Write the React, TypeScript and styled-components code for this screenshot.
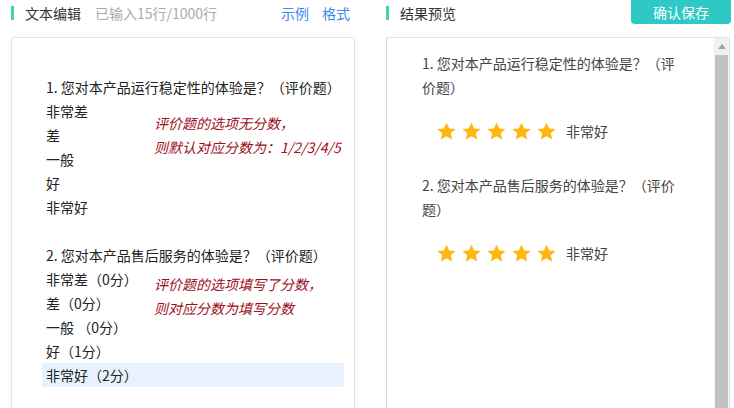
import React from 'react';
import styled, { createGlobalStyle } from 'styled-components';

const GlobalStyle = createGlobalStyle`
  html, body {
    margin: 0;
    padding: 0;
    height: 408px;
    overflow: hidden;
    background: #fff;
  }
  body {
    font-family: "Noto Sans CJK SC", "Noto Sans", "Liberation Sans", sans-serif;
    font-size: 14px;
    color: #333;
  }
`

const Page = styled.div`
  display: flex;
  gap: 31px;
  padding-left: 11px;
  height: 408px;
  overflow: hidden;
`
const Column = styled.div`
  width: 344px;
  display: flex;
  flex-direction: column;
`
const Header = styled.div`
  flex-shrink: 0;
  height: 26px;
  display: flex;
  align-items: center;
  margin-bottom: 11px;
`
const Mark = styled.span`
  width: 3px;
  height: 14px;
  background: #3fd6a4;
  margin-right: 11px;
`
const HeadTitle = styled.span`
  color: #333;
  line-height: 20px;
`
const Counter = styled.span`
  color: #aaa;
  margin-left: 14px;
  line-height: 20px;
`
const Links = styled.div`
  margin-left: auto;
  margin-right: 5px;
  display: flex;
  gap: 13px;
`
const Link = styled.a`
  color: #3d87ee;
  line-height: 20px;
  cursor: pointer;
`
const SaveButton = styled.button`
  margin-left: auto;
  margin-right: -1px;
  align-self: flex-start;
  width: 100px;
  height: 24px;
  border: none;
  border-radius: 0 0 4px 4px;
  background: #2ec9c5;
  color: #fff;
  font-family: inherit;
  font-size: 14px;
  padding: 0;
  cursor: pointer;
`
const Panel = styled.div`
  flex-shrink: 0;
  height: 390px;
  border: 1px solid #e4e4e4;
  border-radius: 3px;
  box-shadow: 0 0 3px rgba(0, 0, 0, 0.05);
  box-sizing: border-box;
`
const EditorPanel = styled(Panel)`
  padding: 37px 10px 0 30px;
`
const Question = styled.div`
  position: relative;
  margin-bottom: 24px;
`
const Line = styled.div<{ $active?: boolean }>`
  height: 24px;
  line-height: 24px;
  padding: 0 4px;
  color: #222;
  white-space: nowrap;
  background: ${props => props.$active ? '#e8f2fe' : 'transparent'};
`
const Note = styled.div<{ $top: number }>`
  position: absolute;
  left: 112px;
  top: ${props => props.$top}px;
  color: #9e0e1c;
  font-style: italic;
  line-height: 24px;
  white-space: nowrap;
`
const PreviewPanel = styled(Panel)`
  display: flex;
  border-left-color: #d6d6d6;
`
const PreviewBody = styled.div`
  flex: 1;
  padding: 13px 30px 0 35px;
`
const PreviewItem = styled.div`
  margin-bottom: 30px;
`
const PreviewTitle = styled.div`
  line-height: 24px;
  color: #444;
`
const Rating = styled.div`
  display: flex;
  align-items: center;
  gap: 6px;
  height: 24px;
  margin: 20px 0 0 15px;
`
const RatingLabel = styled.span`
  margin-left: 4px;
  color: #444;
`
const Scrollbar = styled.div`
  width: 15px;
  background: #f1f1f1;
  display: flex;
  flex-direction: column;
`
const ScrollArrow = styled.div`
  height: 17px;
  display: flex;
  align-items: center;
  justify-content: center;
`
const Thumb = styled.div`
  flex: 1;
  margin: 0 1px 0 1px;
  background: #c1c1c1;
`

const Star = () => (
  <svg width="19" height="19" viewBox="0 0 24 24">
    <path
      fill="#ffb70f"
      d="M12 .8l3.4 7.3 8 .8-6 5.4 1.8 7.9L12 18.1l-7.2 4.1 1.8-7.9-6-5.4 8-.8z"
    />
  </svg>
)

const questions = [
  {
    title: '1. 您对本产品运行稳定性的体验是？（评价题）',
    options: ['非常差', '差', '一般', '好', '非常好'],
    note: ['评价题的选项无分数，', '则默认对应分数为：1/2/3/4/5'],
    noteTop: 36,
  },
  {
    title: '2. 您对本产品售后服务的体验是？（评价题）',
    options: ['非常差（0分）', '差（0分）', '一般 （0分）', '好（1分）', '非常好（2分）'],
    note: ['评价题的选项填写了分数，', '则对应分数为填写分数'],
    noteTop: 29,
  },
]

function App() {
  return (
    <>
      <GlobalStyle />
      <Page>
        <Column>
          <Header>
            <Mark />
            <HeadTitle>文本编辑</HeadTitle>
            <Counter>已输入15行/1000行</Counter>
            <Links>
              <Link>示例</Link>
              <Link>格式</Link>
            </Links>
          </Header>
          <EditorPanel>
            {questions.map((q, qi) => (
              <Question key={qi}>
                <Line>{q.title}</Line>
                {q.options.map((o, oi) => (
                  <Line key={oi} $active={qi === 1 && oi === 4}>{o}</Line>
                ))}
                <Note $top={q.noteTop}>
                  {q.note.map(n => <div key={n}>{n}</div>)}
                </Note>
              </Question>
            ))}
          </EditorPanel>
        </Column>
        <Column>
          <Header>
            <Mark />
            <HeadTitle>结果预览</HeadTitle>
            <SaveButton>确认保存</SaveButton>
          </Header>
          <PreviewPanel>
            <PreviewBody>
              {questions.map((q, qi) => (
                <PreviewItem key={qi}>
                  <PreviewTitle>{q.title}</PreviewTitle>
                  <Rating>
                    {[0, 1, 2, 3, 4].map(s => <Star key={s} />)}
                    <RatingLabel>非常好</RatingLabel>
                  </Rating>
                </PreviewItem>
              ))}
            </PreviewBody>
            <Scrollbar>
              <ScrollArrow>
                <svg width="8" height="5" viewBox="0 0 8 5">
                  <path d="M4 0L8 5H0z" fill="#a3a3a3" />
                </svg>
              </ScrollArrow>
              <Thumb />
            </Scrollbar>
          </PreviewPanel>
        </Column>
      </Page>
    </>
  );
}

export default App;
